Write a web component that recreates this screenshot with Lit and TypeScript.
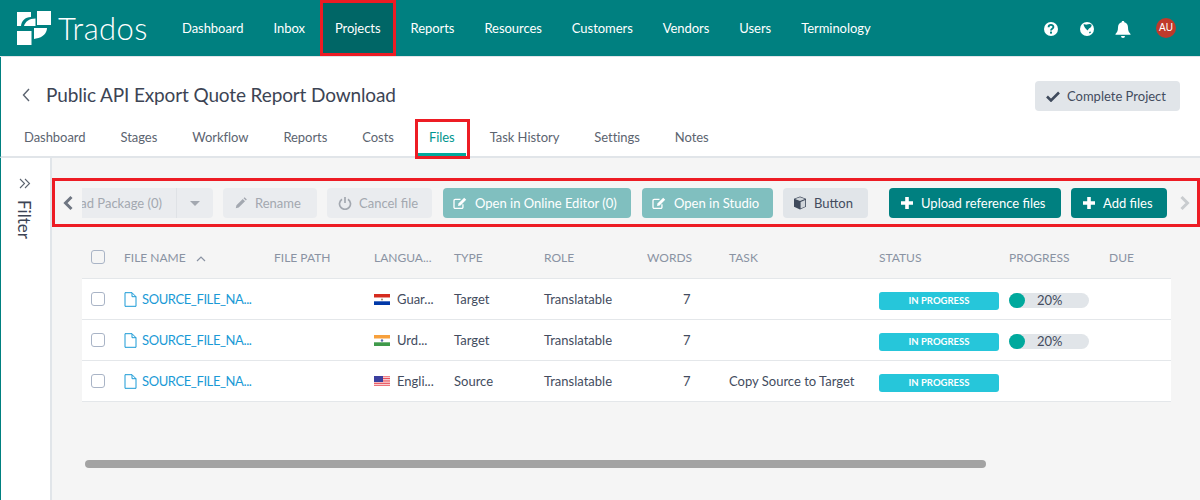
import { LitElement, css, html, svg } from 'lit'
import { customElement } from 'lit/decorators.js'

const NAV = ['Dashboard', 'Inbox', 'Projects', 'Reports', 'Resources', 'Customers', 'Vendors', 'Users', 'Terminology']
const TABS = ['Dashboard', 'Stages', 'Workflow', 'Reports', 'Costs', 'Files', 'Task History', 'Settings', 'Notes']
const COLS = [
  ['FILE NAME', 124], ['FILE PATH', 274], ['LANGUA...', 374], ['TYPE', 454], ['ROLE', 544],
  ['WORDS', 647], ['TASK', 729], ['STATUS', 879], ['PROGRESS', 1009], ['DUE', 1109],
]

const pencil = svg`<path d="M2 14l.8-3.400L10 3.400 12.600 6 5.400 13.200 2 14zM10.900 2.500l1.200-1.200 2.600 2.600-1.200 1.200z"/>`
const edit = html`<svg class="ico" width="15" height="13" viewBox="0 0 18 16"><path d="M12 9v3.500a1.500 1.500 0 0 1-1.500 1.500h-8A1.500 1.500 0 0 1 1 12.500v-8A1.500 1.500 0 0 1 2.500 3H9" fill="none" stroke="currentColor" stroke-width="1.600"/><path d="M6 11l.5-3 7-7 2.500 2.500-7 7z" fill="currentColor"/></svg>`
const plus = html`<svg class="ico" width="14" height="14" viewBox="0 0 14 14"><path d="M5.200 1h3.600v4.200H13v3.600H8.800V13H5.200V8.800H1V5.200h4.200z" fill="currentColor"/></svg>`

const flags = {
  py: html`<svg class="flag" width="16" height="11" viewBox="0 0 16 11"><rect width="16" height="3.700" fill="#d52b1e"/><rect y="3.700" width="16" height="3.600" fill="#fff"/><rect y="7.300" width="16" height="3.700" fill="#0038a8"/><circle cx="8" cy="5.500" r="1" fill="#9a8a70"/></svg>`,
  in: html`<svg class="flag" width="16" height="11" viewBox="0 0 16 11"><rect width="16" height="3.700" fill="#f7a03c"/><rect y="3.700" width="16" height="3.600" fill="#fff"/><rect y="7.300" width="16" height="3.700" fill="#3f9a4a"/><circle cx="8" cy="5.500" r="1.200" fill="#5a6aa8"/></svg>`,
  us: html`<svg class="flag" width="16" height="11" viewBox="0 0 16 11"><rect width="16" height="11" fill="#fff"/><path d="M0 .8h16M0 2.500h16M0 4.200h16M0 5.900h16M0 7.600h16M0 9.300h16" stroke="#e8505a" stroke-width="1"/><rect width="9" height="6" fill="#3b3f9e"/></svg>`,
}

const ROWS = [
  { flag: flags.py, lang: 'Guar...', type: 'Target', task: '', progress: true },
  { flag: flags.in, lang: 'Urd...', type: 'Target', task: '', progress: true },
  { flag: flags.us, lang: 'Engli...', type: 'Source', task: 'Copy Source to Target', progress: false },
]

@customElement('app-root')
export class AppRoot extends LitElement {
  render() {
    return html`
      <header class="top">
        <div class="brand">
          <svg width="34" height="34" viewBox="0 0 34 34" class="logo" fill="#fff">
            <path d="M0 1H14V6C8 6 4.500 10 4 15H0z"/>
            <path d="M20 0H34V14H20z"/>
            <path d="M7 15C8 11 12 7.500 18.500 7.500V15z"/>
            <path d="M0 20H14.500V34H0z"/>
            <path d="M17 17H30C30 22 26 26.500 19 27.500L17 28z"/>
          </svg>
          <span class="word">Trados</span>
        </div>
        <nav class="nav">
          ${NAV.map(n => html`<a class=${n === 'Projects' ? 'on' : ''}>${n}</a>`)}
        </nav>
        <div class="tools">
          <svg width="16" height="16" viewBox="0 0 16 16"><circle cx="8" cy="8" r="7" fill="#fff"/><path d="M5.600 6.200c0-3 4.800-3 4.800-.2 0 1.800-2.400 1.700-2.400 3.500" fill="none" stroke="#008080" stroke-width="1.900"/><rect x="7" y="10.600" width="2" height="2" fill="#008080"/></svg>
          <svg width="16" height="16" viewBox="0 0 16 16"><circle cx="8" cy="8" r="7" fill="#fff"/><path d="M4.500 3.500c1.500-.5 2.500.5 3.500 0s3-1 4.500 0c.5 1.500-.5 3-2.500 4-.5.8-1 1.200-1.500 2C7 8 5 6 4.500 3.500zM10 11l1.500-.5.500 1-1.500 1z" fill="#008080"/></svg>
          <svg class="bell" width="18" height="18" viewBox="0 0 18 18"><path d="M9 1c1 0 1.300.6 1.300 1.200 2.700.6 3.700 2.700 3.700 5.300 0 3.500 1 5 2.500 6.500v.8h-15V14C3 12.500 4 11 4 7.500c0-2.600 1-4.700 3.700-5.300C7.700 1.600 8 1 9 1zM7 16h4a2 2 0 0 1-4 0z" fill="#fff"/></svg>
          <span class="avatar">AU</span>
        </div>
      </header>

      <section class="head">
        <div class="title-row">
          <svg class="back" width="8" height="14" viewBox="0 0 8 14"><path d="M7 1L1.500 7 7 13" fill="none" stroke="#5c6470" stroke-width="1.400"/></svg>
          <h1>Public API Export Quote Report Download</h1>
          <button class="btn grey complete">
            <svg width="14" height="12" viewBox="0 0 14 12"><path d="M1 6.500L5 10.500 13 2.500" fill="none" stroke="#3f4a5c" stroke-width="2.600"/></svg>
            Complete Project
          </button>
        </div>
        <div class="tabs">
          ${TABS.map(t => html`<a class=${t === 'Files' ? 'on' : ''}>${t}</a>`)}
        </div>
      </section>

      <div class="body">
        <aside class="side">
          <svg width="12" height="11" viewBox="0 0 12 11"><path d="M1 1l4.500 4.500L1 10M6 1l4.500 4.500L6 10" fill="none" stroke="#5c6470" stroke-width="1.100"/></svg>
          <span class="filter">Filter</span>
        </aside>
        <main class="main">
          <div class="toolbar">
            <svg class="arrow" width="12" height="16" viewBox="0 0 12 16"><path d="M9.500 2L3.500 8l6 6" fill="none" stroke="#6f7682" stroke-width="3"/></svg>
            <div class="strip">
              <div class="split dis">
                <span class="split-label">Download Package (0)</span>
                <span class="caret"></span>
              </div>
              <button class="btn dis rename"><svg width="14" height="14" viewBox="0 0 16 16" fill="currentColor">${pencil}</svg>Rename</button>
              <button class="btn dis cancel"><svg width="14" height="14" viewBox="0 0 14 14"><path d="M4 3.200a5.500 5.500 0 1 0 6 0M7 1v6" fill="none" stroke="currentColor" stroke-width="1.700"/></svg>Cancel file</button>
              <button class="btn soft online">${edit}Open in Online Editor (0)</button>
              <button class="btn soft studio">${edit}Open in Studio</button>
              <button class="btn grey plain">
                <svg width="14" height="14" viewBox="0 0 14 14"><path d="M7 .5l6 2.300v8L7 13.500 1 10.800v-8z" fill="#3f4a5c"/><path d="M2 3.100L7 5.100 12 3.100 7 1.200zM7.600 6v6.500l4.600-2.100V4.100z" fill="#e1e5e9" opacity=".9"/></svg>
                Button
              </button>
              <button class="btn solid upload">${plus}Upload reference files</button>
              <button class="btn solid add">${plus}Add files</button>
            </div>
            <svg class="arrow next" width="12" height="16" viewBox="0 0 12 16"><path d="M2.500 2l6 6-6 6" fill="none" stroke="#c9cccf" stroke-width="3"/></svg>
          </div>

          <div class="table">
            <div class="thead">
              <span class="check"></span>
              ${COLS.map(([label, x], i) => html`
                <span class="th" style="left:${(x as number) - 82}px">${label}${i === 0 ? html`
                  <svg class="sort" width="10" height="6" viewBox="0 0 10 6"><path d="M1 5l4-4 4 4" fill="none" stroke="#8a93a3" stroke-width="1.200"/></svg>` : ''}</span>`)}
            </div>
            ${ROWS.map(r => html`
              <div class="row">
                <span class="check"></span>
                <span class="name">
                  <svg width="13" height="15" viewBox="0 0 13 15"><path d="M1 .7h7l4 4v9.600H1zM8 .7v4h4" fill="none" stroke="#1a9ad6" stroke-width="1"/></svg>
                  SOURCE_FILE_NA...
                </span>
                <span class="lang">${r.flag}${r.lang}</span>
                <span class="type">${r.type}</span>
                <span class="role">Translatable</span>
                <span class="words">7</span>
                <span class="task">${r.task}</span>
                <span class="status">IN PROGRESS</span>
                ${r.progress ? html`<span class="progress"><i></i><b>20%</b></span>` : ''}
              </div>`)}
          </div>
          <div class="scroll"></div>
        </main>
      </div>

      <span class="mark m-nav"></span>
      <span class="mark m-tab"></span>
      <span class="mark m-bar"></span>
    `
  }

  static styles = css`
    :host {
      display: block;
      width: 1200px;
      height: 500px;
      position: relative;
      overflow: hidden;
      font-family: Lato, sans-serif;
      font-size: 13px;
      color: #434c5e;
      background: #fff;
    }

    .top {
      height: 56px;
      background: #008080;
      display: flex;
      align-items: stretch;
      color: #fff;
      box-shadow: 0 1px 0 #e1e5e9;
      position: relative;
    }
    .brand { width: 167px; padding-left: 17px; box-sizing: border-box; display: flex; align-items: center; gap: 7px; }
    .logo { flex: none; }
    .word { font-weight: 300; font-size: 31px; letter-spacing: .4px; }
    .nav { display: flex; }
    .nav a { display: flex; align-items: center; padding: 0 15px; font-size: 13px; letter-spacing: -.05px; }
    .nav a.on { background: #006666; }
    .tools { margin-left: auto; display: flex; align-items: center; padding-right: 24px; gap: 20px; padding-top: 2px; }
    .tools .avatar { margin-top: -2px; }
    .bell { margin-left: -1px; }
    .avatar {
      width: 20px; height: 20px; border-radius: 50%; background: #c0392b;
      font: 10px/20px "Liberation Sans", sans-serif; text-align: center;
      margin-left: 4px;
    }

    .head { height: 100px; border-bottom: 2px solid #e1e5e9; border-left: 1px solid #008080; }
    .title-row { height: 62px; padding: 15px 20px 0 21px; box-sizing: border-box; display: flex; align-items: center; }
    .back { margin-right: 16px; }
    h1 { margin: 0; font-size: 19px; letter-spacing: -.13px; font-weight: 400; color: #3c4454; }
    .tabs { display: flex; padding-left: 5.500px; height: 38px; }
    .tabs a { padding: 11px 17.500px 0; font-size: 13px; letter-spacing: -.05px; color: #5c6470; height: 38px; box-sizing: border-box; position: relative; }
    .tabs a.on { color: #00968f; }
    .tabs a.on::after { content: ''; position: absolute; left: 6px; right: 6px; bottom: 0; height: 3px; background: #00a99d; }

    .btn {
      font: inherit; border: 0; border-radius: 4px; height: 30px; padding: 0 0 0 11px;
      display: flex; align-items: center; gap: 7px; flex: none; box-sizing: border-box;
    }
    .grey { background: #e1e5e9; color: #434c5e; }
    .dis { background: #eaecef; color: #a3a8b0; }
    .soft { background: #80bfbf; color: #fff; }
    .solid { background: #008080; color: #fff; }
    .complete { width: 145px; margin: 3px 0 0 auto; }

    .body { display: flex; height: 342px; }
    .side {
      width: 47px; padding-right: 2px; border-left: 1px solid #008080; border-right: 2px solid #e1e5e9; background: #fff;
      flex: none; display: flex; flex-direction: column; align-items: center; padding-top: 20px; gap: 11px;
    }
    .filter { writing-mode: vertical-rl; font-size: 17px; color: #3c4454; }
    .main { flex: 1; background: #f5f5f5; position: relative; padding-top: 30px; }

    .toolbar { display: flex; align-items: center; height: 30px; margin-left: 10px; }
    .arrow { flex: none; width: 12px; margin-right: 4px; }
    .next { margin: 0 0 0 8px; }
    .strip { width: 1089px; overflow: hidden; display: flex; gap: 10px; flex: none; margin-left: 4px; }
    .split {
      flex: none; height: 30px; border-radius: 4px; width: 190px; margin-left: -59px;
      display: flex; align-items: center; justify-content: flex-end;
    }
    .split-label { padding-right: 14px; border-right: 1px solid #dfe2e6; line-height: 30px; }
    .caret { width: 0; height: 0; border: 5px solid transparent; border-top: 5px solid #a3a8b0; border-bottom: 0; margin: 0 13px; }
    .rename { width: 94px; }
    .cancel { width: 105px; margin-right: 1px; }
    .online { width: 188px; margin-right: 1px; padding-left: 10px; }
    .studio { width: 131px; padding-left: 10px; }
    .plain { width: 85px; margin-right: 11px; padding-left: 10px; }
    .upload { width: 172px; }
    .add { width: 96px; }

    .table { margin: 19px 29px 0 30px; }
    .thead { height: 41px; position: relative; border-bottom: 1px solid #e4e7ea; }
    .th { position: absolute; top: 13px; font-size: 12px; color: #8a93a3; white-space: nowrap; }
    .sort { margin-left: 7px; }
    .check {
      position: absolute; left: 9px; top: 13px; width: 14px; height: 14px; box-sizing: border-box;
      border: 1.500px solid #a9b4c6; border-radius: 3px; background: #fff;
    }
    .thead .check { background: transparent; }
    .row { height: 40px; position: relative; background: #fff; border-bottom: 1px solid #e4e7ea; color: #434c5e; font-size: 13px; }
    .row > span { position: absolute; top: 12px; white-space: nowrap; }
    .row > .check { top: 13px; }
    .name { left: 42px; color: #1a9ad6; display: flex; align-items: center; gap: 5px; letter-spacing: -.4px; }
    .lang { left: 292px; display: flex; align-items: center; gap: 7px; }
    .flag { flex: none; }
    .type { left: 372px; }
    .role { left: 462px; }
    .words { left: 601px; width: 7px; text-align: right; }
    .task { left: 647px; }
    .row > .status {
      left: 797px; top: 13px; width: 120px; height: 18px; border-radius: 3px; background: #26c6da;
      color: #fff; font-size: 9.500px; font-weight: 700; line-height: 18px; text-align: center;
    }
    .row > .progress {
      left: 927px; top: 14px; width: 80px; height: 15px; border-radius: 8px; background: #e1e5e9;
    }
    .progress i { position: absolute; left: 0; top: 0; width: 16px; height: 15px; border-radius: 8px; background: #00a99d; }
    .progress b { position: absolute; left: 28px; top: -1px; font-weight: 400; }

    .scroll { position: absolute; left: 33px; top: 302px; width: 901px; height: 8px; border-radius: 4px; background: #a3a3a3; }

    .mark { position: absolute; border: 3px solid #ed1c24; box-sizing: border-box; }
    .m-nav { left: 320px; top: 0; width: 76px; height: 56px; }
    .m-tab { left: 415px; top: 119px; width: 55px; height: 40px; }
    .m-bar { left: 52px; top: 178px; width: 1148px; height: 49px; }
  `
}
